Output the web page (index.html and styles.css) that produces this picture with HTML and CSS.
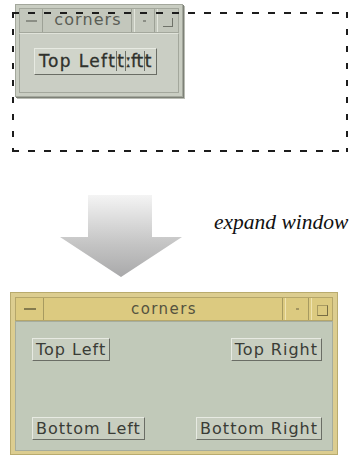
FILE: index.html
```html
<!DOCTYPE html>
<html>
<head>
<meta charset="utf-8">
<link rel="stylesheet" href="styles.css">
</head>
<body>
<div class="page">
  <div class="before">
    <div class="win win-small">
      <div class="titlebar">
        <span class="tb-btn tb-menu"><span class="dash"></span></span>
        <span class="tb-title">corners</span>
        <span class="tb-btn tb-min"><span class="dot"></span></span>
        <span class="tb-btn tb-max"><span class="corner"></span></span>
      </div>
      <div class="client client-small">
        <div class="btn btn-small">Top Left<span class="ov">t</span><span class="ov">ːft</span><span class="ov ov-last">t</span></div>
      </div>
    </div>
    <div class="dashed"></div>
  </div>
  <div class="middle">
    <svg class="arrow" width="122" height="82" viewBox="0 0 122 82">
      <defs>
        <linearGradient id="ag" x1="0" y1="0" x2="0" y2="1">
          <stop offset="0" stop-color="#f4f4f4"/>
          <stop offset="0.6" stop-color="#c4c4c4"/>
          <stop offset="1" stop-color="#a9a9aa"/>
        </linearGradient>
      </defs>
      <path d="M28 0 H92 V42 H122 L61 82 L0 42 H28 Z" fill="url(#ag)"/>
    </svg>
    <div class="label">expand window</div>
  </div>
  <div class="win win-big">
    <div class="titlebar titlebar-big">
      <span class="tb-btn tb-menu"><span class="dash"></span></span>
      <span class="tb-title">corners</span>
      <span class="tb-btn tb-min"><span class="dot"></span></span>
      <span class="tb-btn tb-max"><span class="box"></span></span>
    </div>
    <div class="client client-big">
      <div class="btn tl">Top Left</div>
      <div class="btn tr">Top Right</div>
      <div class="btn bl">Bottom Left</div>
      <div class="btn br">Bottom Right</div>
    </div>
  </div>
</div>
</body>
</html>
```

FILE: styles.css
```css
html, body {
  margin: 0;
  padding: 0;
  background: #ffffff;
}
.page {
  width: 354px;
  height: 458px;
  display: flex;
  flex-direction: column;
  font-family: "DejaVu Sans", "Liberation Sans", sans-serif;
  overflow: hidden;
}

/* ---------- top: small window inside dashed frame ---------- */
.before {
  position: relative;
  height: 152px;
  flex: none;
}
.dashed {
  position: absolute;
  left: 12px;
  top: 12px;
  width: 336px;
  height: 140px;
  pointer-events: none;
  background:
    repeating-linear-gradient(90deg, #1c1c1c 0 7px, transparent 7px 16px) left top / 100% 2px no-repeat,
    repeating-linear-gradient(90deg, #1c1c1c 0 7px, transparent 7px 16px) left bottom / 100% 2px no-repeat,
    repeating-linear-gradient(180deg, #1c1c1c 0 6px, transparent 6px 17px) left top / 2px 100% no-repeat,
    repeating-linear-gradient(180deg, #1c1c1c 0 6px, transparent 6px 17px) right top / 2px 100% no-repeat;
}
.win {
  box-sizing: border-box;
  display: flex;
  flex-direction: column;
}
.win-small {
  margin: 4px 0 0 15px;
  width: 168px;
  height: 93px;
  background: #c9cdc2;
  border: 1px solid #a3a79c;
  box-shadow: 1px 1px 0 #7d8077, 2px 2px 0 #b9bcb3;
  padding: 3px;
}
.titlebar {
  display: flex;
  height: 25px;
  gap: 2px;
  background: #c3c7bc;
  border: 1px solid #a4a89d;
  box-sizing: border-box;
  flex: none;
}
.tb-btn {
  flex: none;
  display: flex;
  align-items: center;
  justify-content: center;
  border-right: 1px solid #9da196;
  border-left: 1px solid #e2e5dc;
}
.tb-menu { width: 22px; border-left: none; }
.tb-min { width: 19px; }
.tb-max { width: 20px; border-right: none; }
.tb-title {
  flex: 1;
  text-align: center;
  font-size: 16px;
  line-height: 22px;
  color: #5a5d55;
  letter-spacing: 1.1px;
  border-right: 1px solid #9da196;
}
.dash {
  width: 11px;
  height: 2px;
  background: #8b8e85;
}
.dot {
  width: 3px;
  height: 2px;
  background: #8b8e85;
}
.corner {
  width: 9px;
  height: 8px;
  border-right: 1px solid #6f7269;
  border-bottom: 1px solid #6f7269;
  margin-top: 4px;
}
.client-small {
  flex: 1;
  background: #cacec4;
  border: 1px solid #a3a79c;
  border-top-color: #e0e3da;
  display: flex;
  align-items: flex-start;
  padding: 14px 0 0 14px;
}
.btn {
  font-size: 16px;
  line-height: 19px;
  color: #3f423c;
  background: #cfd4c8;
  border: 1px solid #e7eae2;
  border-right-color: #6a6d65;
  border-bottom-color: #6a6d65;
  padding: 1px 3px;
  white-space: nowrap;
}
.btn-small {
  font-size: 17px;
  line-height: 23px;
  color: #2f312c;
  letter-spacing: 1.4px;
  padding: 1px 2px 1px 4px;
  background: #d0d4ca;
  -webkit-text-stroke: 0.3px #2f312c;
}
.ov {
  border-left: 1px solid #6e7169;
  letter-spacing: -0.3px;
  padding-right: 1px;
}
.ov-last {
  padding-right: 3px;
}

/* ---------- middle: arrow + label ---------- */
.middle {
  flex: none;
  height: 140px;
  display: flex;
  align-items: flex-start;
}
.arrow {
  margin: 43px 0 0 60px;
  flex: none;
}
.label {
  margin: 58px 0 0 32px;
  font-family: "Liberation Serif", serif;
  font-style: italic;
  font-size: 21.5px;
  color: #111;
  white-space: nowrap;
}

/* ---------- big window ---------- */
.win-big {
  margin: 0 0 0 10px;
  width: 328px;
  height: 163px;
  background: #dccd90;
  border: 1px solid #b9ab6e;
  padding: 4px 4px 3px 4px;
  flex: none;
}
.titlebar-big {
  background: #dcca80;
  border-color: #b5a66a;
  height: 24px;
}
.titlebar-big .tb-btn {
  border-right-color: #a79a60;
  border-left-color: #efe3b0;
}
.titlebar-big .tb-menu { width: 27px; border-left: none; }
.titlebar-big .tb-min { width: 22px; }
.titlebar-big .tb-max { width: 20px; border-right: none; }
.titlebar-big .tb-title {
  color: #54523f;
  border-right-color: #a79a60;
  font-size: 15px;
  letter-spacing: 1.4px;
}
.titlebar-big .dash { background: #857b4e; width: 12px; }
.titlebar-big .dot { background: #a39560; }
.box {
  width: 9px;
  height: 9px;
  border: 1px solid #a89a62;
  border-right-color: #776d44;
  border-bottom-color: #776d44;
  margin-top: 2px;
}
.client-big {
  flex: 1;
  background: #c1c9b9;
  border: 1px solid #a6ad9e;
  display: grid;
  grid-template-columns: 1fr 1fr;
  grid-template-rows: 1fr 1fr;
  padding: 16px 10px 10px 16px;
}
.client-big .btn {
  font-size: 16px;
  letter-spacing: 1px;
  line-height: 19px;
  padding: 1px 3px;
  background: #c8cec0;
  color: #3a3c36;
}
.tl { justify-self: start; align-self: start; }
.tr { justify-self: end; align-self: start; }
.bl { justify-self: start; align-self: end; }
.br { justify-self: end; align-self: end; }
```
